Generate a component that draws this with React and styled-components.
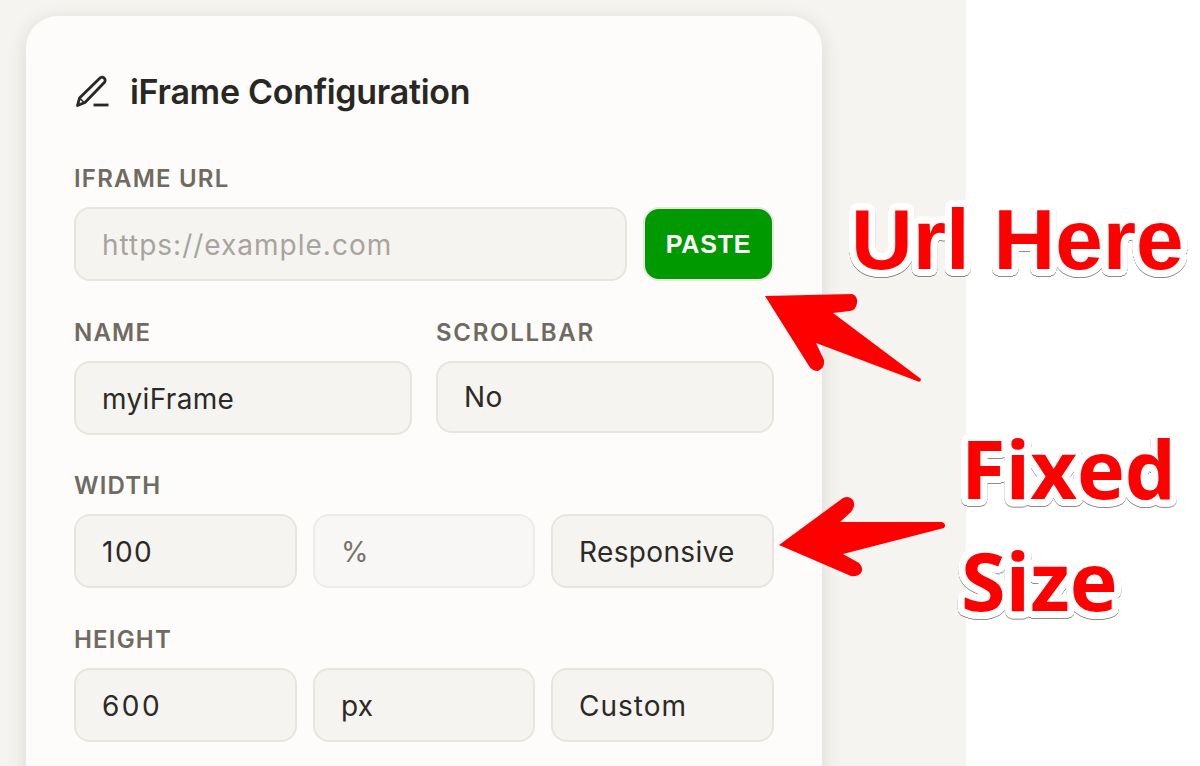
import React from "react";
import styled, { createGlobalStyle } from "styled-components";

const GlobalStyle = createGlobalStyle`
  html, body {
    margin: 0;
    height: 100%;
    background: #ffffff;
    overflow: hidden;
  }
  #root {
    height: 100%;
  }
`;

// ring of shadows gives the sticker outline its round corners
const outline = Array.from({ length: 32 }, (_, i) => {
  const a = (i / 32) * Math.PI * 2;
  return `${(Math.cos(a) * 7).toFixed(2)}px ${(Math.sin(a) * 7).toFixed(2)}px 0 #ffffff`;
}).join(", ");

const Viewport = styled.div`
  position: relative;
  width: 1200px;
  height: 766px;
  overflow: hidden;
  background: #ffffff;
`;

const Page = styled.div`
  width: 966px;
  height: 766px;
  box-sizing: border-box;
  padding: 16px 0 0 26px;
  background: #f5f4f0;
  overflow: hidden;
`;

const Card = styled.section`
  width: 796px;
  height: 900px;
  box-sizing: border-box;
  padding: 58px 48px 0;
  background: #fdfcfa;
  border-radius: 32px;
  box-shadow: 0 4px 20px rgba(60, 50, 40, 0.14);
  font-family: "Inter", "Noto Sans", sans-serif;
`;

const Header = styled.header`
  display: flex;
  align-items: center;
  gap: 20px;
  height: 36px;
  margin-bottom: 59px;
`;

const Title = styled.h2`
  margin: -1px 0 0;
  font-size: 34px;
  font-weight: 600;
  letter-spacing: -0.3px;
  color: #292724;
`;

const Label = styled.label`
  display: block;
  height: 20px;
  line-height: 20px;
  margin-bottom: 18px;
  font-size: 24px;
  font-weight: 600;
  letter-spacing: ${(p) => p.$spacing || 1.2}px;
  color: #6f6a62;
`;

const Section = styled.div`
  margin-bottom: 41.5px;
`;

const Row = styled.div`
  display: grid;
  grid-template-columns: ${(p) => p.$cols};
  gap: ${(p) => p.$gap || 16}px;
  align-items: start;
`;

const Field = styled.div`
  display: flex;
  align-items: center;
  box-sizing: border-box;
  height: ${(p) => p.$h || 74}px;
  padding: ${(p) => (p.$h ? 0 : 2)}px 26px 0;
  background: ${(p) => (p.$muted ? "#f8f7f5" : "#f5f4f1")};
  border: 2px solid ${(p) => (p.$muted ? "#efece7" : "#e8e5df")};
  border-radius: 16px;
  font-size: 28px;
  font-weight: 400;
  letter-spacing: ${(p) => p.$spacing || 0.35}px;
  color: ${(p) => p.$color || "#2c2a27"};
`;

const PasteButton = styled.button`
  height: 74px;
  padding: 0;
  background: #009900;
  border: 2px solid #e8e5df;
  border-radius: 16px;
  font-family: "Liberation Sans", Arial, sans-serif;
  font-size: 25px;
  font-weight: 700;
  letter-spacing: 0.8px;
  color: #ffffff;
`;

const Callout = styled.div`
  position: absolute;
  left: ${(p) => p.$x}px;
  top: ${(p) => p.$y}px;
  font-family: ${(p) => p.$font};
  font-size: ${(p) => p.$size}px;
  font-weight: 700;
  line-height: 84px;
  white-space: nowrap;
  color: #ff0000;
  text-shadow: ${outline};
  filter: drop-shadow(0 1px 0.5px rgba(0, 0, 0, 0.45));
`;

const ArrowLayer = styled.svg`
  position: absolute;
  left: 0;
  top: 0;
  width: 1200px;
  height: 766px;
  pointer-events: none;
`;

const PenIcon = () => (
  <svg width="36" height="36" viewBox="0 0 36 36" fill="none" stroke="#292724" strokeWidth="2.8" strokeLinejoin="round">
    <path d="M3.5 31.5 5.5 24 25.5 4.5a3.1 3.1 0 0 1 5 3.8L11 28.5z" />
    <path d="M6 24.5 10.5 29" strokeWidth="1.6" />
    <path d="M19.5 31h15" strokeWidth="2.8" />
  </svg>
);

const App = () => (
  <Viewport>
    <GlobalStyle />
    <Page>
      <Card>
        <Header>
          <PenIcon />
          <Title>iFrame Configuration</Title>
        </Header>

        <Section>
          <Label>IFRAME URL</Label>
          <Row $cols="553px 131px">
            <Field $color="#a8a49d" $spacing={1}>https://example.com</Field>
            <PasteButton>PASTE</PasteButton>
          </Row>
        </Section>

        <Section>
          <Row $cols="338px 338px" $gap={24}>
            <div>
              <Label>NAME</Label>
              <Field>myiFrame</Field>
            </div>
            <div>
              <Label $spacing={1.7}>SCROLLBAR</Label>
              <Field $h={72}>No</Field>
            </div>
          </Row>
        </Section>

        <Section>
          <Label>WIDTH</Label>
          <Row $cols="223px 222px 223px">
            <Field $spacing={1.5}>100</Field>
            <Field $muted $color="#77736c">%</Field>
            <Field>Responsive</Field>
          </Row>
        </Section>

        <Section>
          <Label>HEIGHT</Label>
          <Row $cols="223px 222px 223px">
            <Field $spacing={2.5}>600</Field>
            <Field>px</Field>
            <Field $spacing={1}>Custom</Field>
          </Row>
        </Section>
      </Card>
    </Page>

    <Callout $x={851} $y={198} $size={85.5} $font={'"Liberation Sans", Arial, sans-serif'}>Url Here</Callout>
    <Callout $x={961} $y={426} $size={81} $font={'"Open Sans", "Noto Sans", sans-serif'}>Fixed</Callout>
    <Callout $x={961} $y={538} $size={81} $font={'"Open Sans", "Noto Sans", sans-serif'}>Size</Callout>

    <ArrowLayer viewBox="0 0 1200 766">
      <path
        fill="#ff0000"
        d="M765 296 852 294Q858 296 857 303 856 310 850 311L833 313 921 379Q921 383 917 381L816 343 824 360Q825 368 818 371 812 371 809 366Z"
      />
      <path
        fill="#ff0000"
        d="M779 545 843 498Q849 495 853 500 856 506 851 512L840 522 942 522Q947 524 944 528L843 554 859 563Q864 568 861 573 857 577 851 576Z"
      />
    </ArrowLayer>
  </Viewport>
);

export default App;
